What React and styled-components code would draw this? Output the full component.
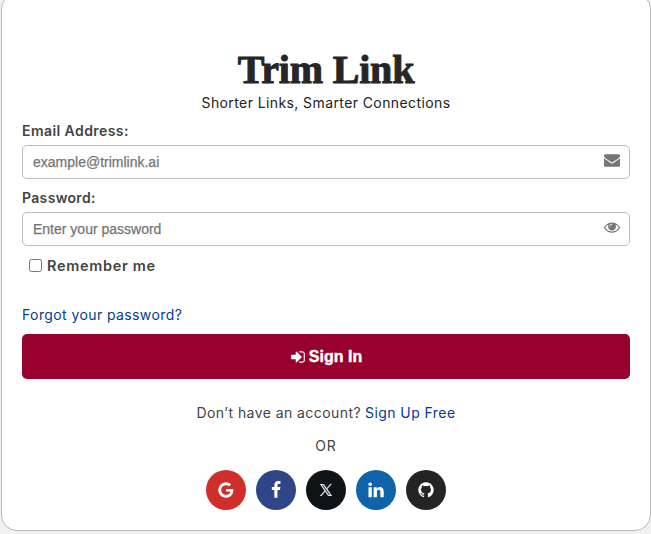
import React from "react";
import styled, { createGlobalStyle } from "styled-components";

const GlobalStyle = createGlobalStyle`
  * { box-sizing: border-box; }
  html, body { margin: 0; height: 100%; overflow: hidden; background: #f1f1f1; }
  body { font-family: Inter, sans-serif; font-size: 14px; color: #444; }
`;

const Page = styled.main`
  height: 534px;
  padding-left: 1px;
  overflow: hidden;
  display: flex;
  align-items: flex-end;
`;

const Card = styled.form`
  width: 650px;
  height: 538px;
  flex: none;
  margin-bottom: 3px;
  padding: 0 20px;
  border: 1px solid #b9b9b9;
  border-radius: 16px;
  background: #fff;
  display: flex;
  flex-direction: column;
`;

const Header = styled.header`
  padding-top: 55px;
  text-align: center;
  color: #222;
`;

const Title = styled.h1`
  margin: 0;
  height: 44px;
  font: bold 40px/42px "Liberation Serif", serif;
  letter-spacing: -0.2px;
  color: #262626;
  -webkit-text-stroke: 1px #262626;
`;

const Tagline = styled.p`
  margin: 0;
  height: 20px;
  line-height: 20px;
  letter-spacing: 0.4px;
`;

const Field = styled.div`
  height: 67px;
  display: flex;
  flex-direction: column;
`;

const Label = styled.label`
  height: 32px;
  padding-top: 8px;
  line-height: 20px;
  font-weight: 600;
  letter-spacing: ${(p) => p.$track || "0"};
`;

const InputBox = styled.div`
  height: 34px;
  display: flex;
  align-items: center;
  padding: 0 9px 0 10px;
  border: 1px solid #bdbdbd;
  border-radius: 5px;
  color: #757575;
`;

const Input = styled.input`
  flex: 1;
  min-width: 0;
  border: 0;
  padding: 0;
  outline: 0;
  background: transparent;
  font: 14px "Liberation Sans", sans-serif;
  &::placeholder { color: #757575; opacity: 1; -webkit-text-stroke: 0.25px #757575; }
`;

const Glyph = styled.svg`
  display: block;
  flex: none;
  width: ${(p) => p.$size}px;
  height: ${(p) => p.$size}px;
  margin-bottom: ${(p) => p.$lift || 0}px;
  fill: currentColor;
`;

const Remember = styled.label`
  height: 38px;
  padding: 0 0 2px 7px;
  display: flex;
  align-items: center;
  gap: 5px;
  font-weight: 600;
  font-size: 14.5px;
  letter-spacing: 0.7px;
`;

const Checkbox = styled.input`
  appearance: none;
  width: 13px;
  height: 13px;
  margin: 0;
  border: 1px solid #767676;
  border-radius: 2.5px;
  background: #fff;
`;

const Link = styled.a`
  color: #003b99;
  text-decoration: none;
  letter-spacing: ${(p) => p.$track || "inherit"};
`;

const Forgot = styled.div`
  height: 49px;
  padding-top: 20px;
  line-height: 20px;
`;

const SignInButton = styled.button`
  height: 45px;
  border: 0;
  border-radius: 5px;
  background: #98002e;
  color: #fff;
  display: flex;
  align-items: center;
  justify-content: center;
  gap: 3px;
  font: bold 16px "Liberation Sans", sans-serif;
  -webkit-text-stroke: 0.4px #fff;
`;

const Note = styled.p`
  margin: 0;
  height: ${(p) => p.$height}px;
  display: flex;
  align-items: flex-end;
  justify-content: center;
  gap: 4px;
  line-height: 20px;
  letter-spacing: ${(p) => p.$track || "0"};
`;

const Socials = styled.nav`
  padding-top: 14px;
  display: flex;
  justify-content: center;
  gap: 10px;
`;

const SocialLink = styled.a`
  width: 40px;
  height: 40px;
  border-radius: 50%;
  display: grid;
  place-items: center;
  color: #fff;
  background: ${(p) => p.$color};
`;

const paths = {
  envelope: "M1792 710v794q0 66-47 113t-113 47h-1472q-66 0-113-47t-47-113v-794q44 49 101 87 362 246 497 345 57 42 92.5 65.5t94.5 48 110 24.5h2q51 0 110-24.5t94.5-48 92.5-65.5q170-123 498-345 57-39 100-87zm0-294q0 79-49 151t-122 123q-376 261-468 325-10 7-42.5 31t-54 38.5-52 32.5-57.5 27-50 9h-2q-23 0-50-9t-57.5-27-52-32.5-54-38.5-42.5-31q-91-64-262-182.5t-205-142.5q-62-42-117-115.5t-55-136.5q0-78 41.5-130t118.5-52h1472q65 0 112.5 47t47.5 113z",
  eye: "M1664 960q-152-236-381-353 61 104 61 225 0 185-131.5 316.5t-316.5 131.5-316.5-131.5-131.5-316.5q0-121 61-225-229 117-381 353 133 205 333.5 326.5t434.5 121.5 434.5-121.5 333.5-326.5zm-720-384q0-20-14-34t-34-14q-125 0-214.5 89.5t-89.5 214.5q0 20 14 34t34 14 34-14 14-34q0-86 61-147t147-61q20 0 34-14t14-34zm848 384q0 34-20 69-140 230-376.5 368.5t-499.5 138.5-499.5-139-376.5-368q-20-35-20-69t20-69q140-229 376.5-368t499.5-139 499.5 139 376.5 368q20 35 20 69z",
  signIn: "M1312 896q0 26-19 45l-544 544q-19 19-45 19t-45-19-19-45v-288h-448q-26 0-45-19t-19-45v-384q0-26 19-45t45-19h448v-288q0-26 19-45t45-19 45 19l544 544q19 19 19 45zm352-352v704q0 119-84.5 203.5t-203.5 84.5h-320q-13 0-22.5-9.5t-9.5-22.5q0-4-1-20t-.5-26.5 3-23.5 10-19.5 20.5-6.5h320q66 0 113-47t47-113v-704q0-66-47-113t-113-47h-312l-11.5-1-11.5-3-8-5.5-7-9-2-13.5q0-4-1-20t-.5-26.5 3-23.5 10-19.5 20.5-6.5h320q119 0 203.5 84.5t84.5 203.5z",
  google: "M896 786h725q12 67 12 128 0 217-91 387.5t-259.5 266.5-386.5 96q-157 0-299-60.5t-245-163.5-163.5-245-60.5-299 60.5-299 163.5-245 245-163.5 299-60.5q300 0 515 201l-209 201q-123-119-306-119-129 0-238.5 65t-173.5 176.5-64 243.5 64 243.5 173.5 176.5 238.5 65q87 0 160-24t120-60 82-82 51.5-87 22.5-78h-436v-264z",
  facebook: "M1343 12v264h-157q-86 0-116 36t-30 108v189h293l-39 296h-254v759h-306v-759h-255v-296h255v-218q0-186 104-288.5t277-102.5q147 0 228 12z",
  linkedin: "M477 625v991h-330v-991h330zm21-306q1 73-50.5 122t-135.5 49h-2q-82 0-132-49t-50-122q0-74 51.5-122.5t134.5-48.5 133 48.5 51 122.5zm1166 729v568h-329v-530q0-105-40.5-164.5t-126.5-59.5q-63 0-105.5 34.5t-63.5 85.5q-11 30-11 81v553h-329q2-399 2-647t-1-296l-1-48h329v144h-2q20-32 41-56t56.5-52 87-43.5 114.5-15.5q171 0 275 113.5t104 332.5z",
  github: "M896 128q209 0 385.5 103t279.5 279.5 103 385.5q0 251-146.5 451.5t-378.5 277.5q-27 5-40-7t-13-30q0-3 .5-76.5t.5-134.5q0-97-52-142 57-6 102.5-18t94-39 81-66.5 53-105 20.5-150.5q0-119-79-206 37-91-8-204-28-9-81 11t-92 44l-38 24q-93-26-192-26t-192 26q-16-11-42.5-27t-83.5-38.5-85-13.5q-45 113-8 204-79 87-79 206 0 85 20.5 150t52.5 105 80.5 67 94 39 102.5 18q-39 36-49 103-21 10-45 15t-57 5-65.5-21.5-55.5-62.5q-19-32-48.5-52t-49.5-24l-20-3q-21 0-29 4.5t-5 11.5 9 14 13 12l7 5q22 10 43.5 38t31.5 51l10 23q13 38 44 61.5t67 30 69.5 7 55.5-3.5l23-4q0 38 .5 88.5t.5 54.5q0 18-13 30t-40 7q-232-77-378.5-277.5t-146.5-451.5q0-209 103-385.5t279.5-279.5 385.5-103z",
};

const xPath = "M14.234 10.162 22.977 0h-2.072l-7.591 8.824L7.251 0H.258l9.168 13.343L.258 24H2.33l8.016-9.318L16.749 24h6.993zm-2.837 3.299-.929-1.329L3.076 1.56h3.182l5.965 8.532.929 1.329 7.754 11.09h-3.182z";

function Icon({ name, size, lift }) {
  return (
    <Glyph viewBox="0 0 1792 1792" $size={size} $lift={lift} aria-hidden="true">
      <path d={paths[name]} />
    </Glyph>
  );
}

const socials = [
  { name: "google", label: "Google", color: "#d02e2b", size: 18 },
  { name: "facebook", label: "Facebook", color: "#2f4587", size: 18 },
  { name: "x", label: "X", color: "#0f1419", size: 12 },
  { name: "linkedin", label: "LinkedIn", color: "#0e63a9", size: 18 },
  { name: "github", label: "GitHub", color: "#242424", size: 18 },
];

export default function App() {
  return (
    <>
      <GlobalStyle />
      <Page>
        <Card>
          <Header>
            <Title>Trim Link</Title>
            <Tagline>Shorter Links, Smarter Connections</Tagline>
          </Header>
          <Field>
            <Label htmlFor="email" $track="0.43px">Email Address:</Label>
            <InputBox>
              <Input id="email" type="email" placeholder="example@trimlink.ai" />
              <Icon name="envelope" size={16} lift={5} />
            </InputBox>
          </Field>
          <Field>
            <Label htmlFor="password" $track="0.33px">Password:</Label>
            <InputBox>
              <Input id="password" type="password" placeholder="Enter your password" />
              <Icon name="eye" size={16} lift={5} />
            </InputBox>
          </Field>
          <Remember>
            <Checkbox type="checkbox" />
            Remember me
          </Remember>
          <Forgot>
            <Link href="#" $track="0.4px">Forgot your password?</Link>
          </Forgot>
          <SignInButton type="button">
            <Icon name="signIn" size={16} />
            Sign In
          </SignInButton>
          <Note $height={44} $track="0.43px">
            <span>Don’t have an account?</span>
            <Link href="#">Sign Up Free</Link>
          </Note>
          <Note $height={33} $track="0.9px">OR</Note>
          <Socials>
            {socials.map((s) => (
              <SocialLink key={s.name} href="#" aria-label={s.label} $color={s.color}>
                {s.name === "x" ? (
                  <Glyph viewBox="0 0 24 24" $size={s.size} aria-hidden="true">
                    <path d={xPath} stroke="currentColor" strokeWidth="0.8" />
                  </Glyph>
                ) : (
                  <Icon name={s.name} size={s.size} />
                )}
              </SocialLink>
            ))}
          </Socials>
        </Card>
      </Page>
    </>
  );
}
